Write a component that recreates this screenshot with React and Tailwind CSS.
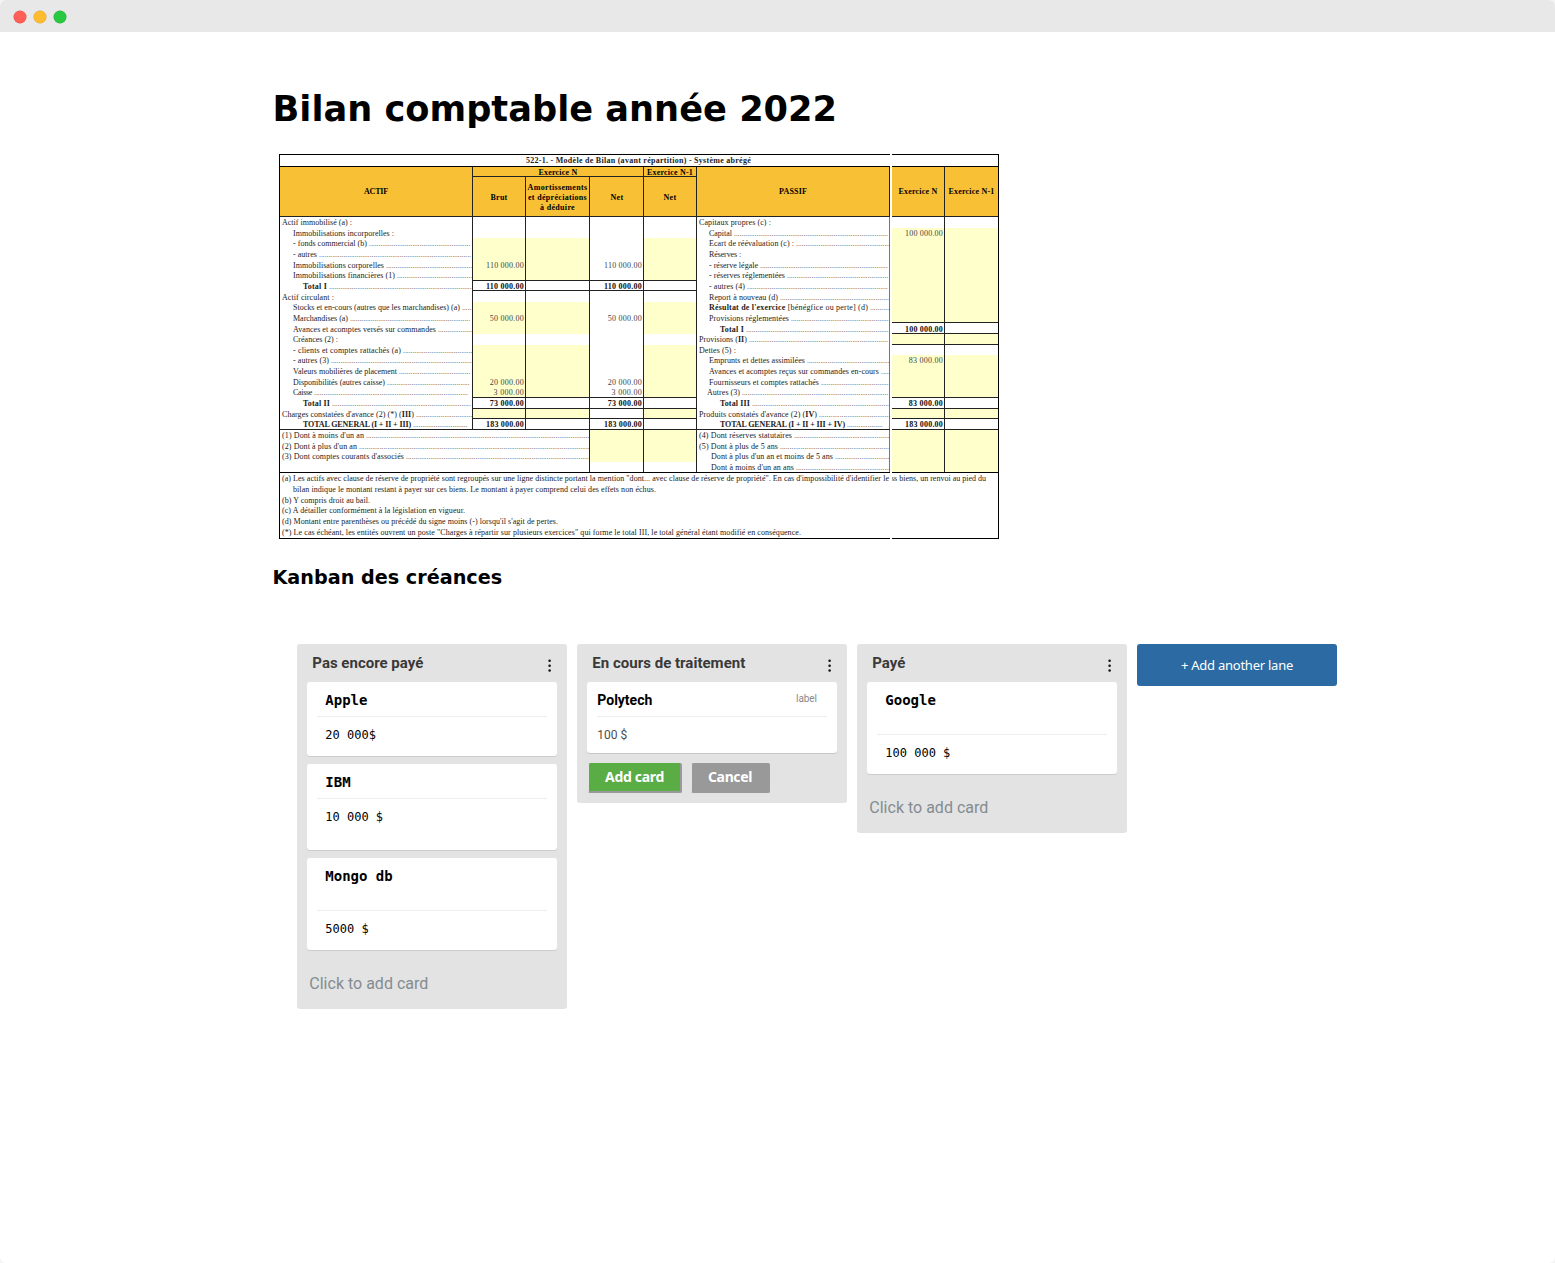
import { useLayoutEffect, useRef, useState } from "react";

// Spreads a line of text over a given width by adjusting its tracking.
function Fit({ w, className = "", children }) {
  const ref = useRef(null);
  const [spacing, setSpacing] = useState(0);
  useLayoutEffect(() => {
    const el = ref.current;
    const natural = el.getBoundingClientRect().width;
    setSpacing((w - natural) / el.textContent.length);
  }, [w]);
  return (
    <span ref={ref} className={"inline-block shrink-0 whitespace-pre " + className} style={{ letterSpacing: spacing + "px" }}>
      {children}
    </span>
  );
}

const DOT_PITCH = 1.875;

// Dot leader that holds as many periods as its cell has room for.
function Leader() {
  const ref = useRef(null);
  const [count, setCount] = useState(0);
  useLayoutEffect(() => {
    setCount(Math.floor(ref.current.getBoundingClientRect().width / DOT_PITCH));
  }, []);
  return (
    <span ref={ref} className="ml-[2px] min-w-0 flex-1 text-[7.5px] whitespace-nowrap text-[#444]">
      {".".repeat(count)}
    </span>
  );
}

const INDENT = { 0: "pl-[2px]", 1: "pl-[13px]", 2: "pl-[23px]", 3: "pl-[12px]", 4: "pl-[10px]", 5: "pl-[14px]" };

function Label({ row }) {
  const [indent, text, w, dots, bold] = row;
  return (
    <div className={"flex min-h-0 items-center pt-[0.6px] pr-px " + INDENT[indent]}>
      <Fit w={w} className={bold ? "font-bold" : ""}>{text}</Fit>
      {dots && <Leader />}
    </div>
  );
}

const actif = [
  [0, "Actif immobilisé (a) :", 70],
  [1, "Immobilisations incorporelles :", 101],
  [1, "- fonds commercial (b)", 74, true],
  [1, "- autres", 24, true],
  [1, "Immobilisations corporelles", 91, true],
  [1, "Immobilisations financières (1)", 102, true],
  [2, "Total I", 24, true, true],
  [0, "Actif circulant :", 52],
  [1, "Stocks et en-cours (autres que les marchandises) (a)", 167, true],
  [1, "Marchandises (a)", 55, true],
  [1, "Avances et acomptes versés sur commandes", 143, true],
  [1, "Créances (2) :", 45],
  [1, "- clients et comptes rattachés (a)", 108, true],
  [1, "- autres (3)", 36, true],
  [1, "Valeurs mobilières de placement", 104, true],
  [1, "Disponibilités (autres caisse)", 92, true],
  [1, "Caisse", 19, true],
  [2, "Total II", 27, true, true],
  [0, <>Charges constatées d'avance (2) (*) (<b>III</b>)</>, 132, true],
  [2, "TOTAL GENERAL (I + II + III)", 108, true, true],
];

const passif = [
  [0, "Capitaux propres (c) :", 72],
  [3, "Capital", 23, true],
  [3, "Ecart de réévaluation (c) :", 85, true],
  [3, "Réserves :", 32],
  [3, "- réserve légale", 49, true],
  [3, "- réserves réglementées", 76, true],
  [3, "- autres (4)", 36, true],
  [3, "Report à nouveau (d)", 69, true],
  [3, <><b>Résultat de l'exercice</b> [bénégfice ou perte] (d)</>, 159, true],
  [3, "Provisions réglementées", 80, true],
  [2, "Total I", 24, true, true],
  [0, <>Provisions (<b>II</b>)</>, 48, true],
  [0, "Dettes (5) :", 37],
  [3, "Emprunts et dettes assimilées", 96, true],
  [3, "Avances et acomptes reçus sur commandes en-cours", 170, true],
  [3, "Fournisseurs et comptes rattachés", 110, true],
  [4, "Autres (3)", 33, true],
  [2, "Total III", 30, true, true],
  [0, <>Produits constatés d'avance (2) (<b>IV</b>)</>, 118, true],
  [2, "TOTAL GENERAL (I + II + III + IV)", 125, true, true],
];

const actifNotes = [
  [0, "(1) Dont à moins d'un an", 82, true],
  [0, "(2) Dont à plus d'un an", 75, true],
  [0, "(3) Dont comptes courants d'associés", 122, true],
];
const passifNotes = [
  [0, "(4) Dont réserves statutaires", 93, true],
  [0, "(5) Dont à plus de 5 ans", 79, true],
  [5, "Dont à plus d'un an et moins de 5 ans", 122, true],
  [5, "Dont à moins d'un an ans", 83, true],
];

const ACTIF_FILL = [2, 3, 4, 5, 8, 9, 10, 12, 13, 14, 15, 16, 18];
const PASSIF_FILL = [1, 2, 3, 4, 5, 6, 7, 8, 9, 11, 13, 14, 15, 16, 18];
const ACTIF_RULES = [6, 7, 17, 18, 19];
const PASSIF_RULES = [10, 11, 12, 17, 18, 19];

const brut = { 4: "110 000.00", 6: "110 000.00", 9: "50 000.00", 15: "20 000.00", 16: "3 000.00", 17: "73 000.00", 19: "183 000.00" };
const passifValues = { 1: "100 000.00", 10: "100 000.00", 13: "83 000.00", 17: "83 000.00", 19: "183 000.00" };
const ACTIF_TOTALS = [6, 17, 19];
const PASSIF_TOTALS = [10, 17, 19];

function Values({ values = {}, fill = [], rules, totals, line = true }) {
  return (
    <div className={"grid grid-rows-[repeat(20,10.65px)] " + (line ? "border-r border-[#222]" : "")}>
      {Array.from({ length: 20 }, (_, i) => (
        <div
          key={i}
          className={
            "flex items-center justify-end pt-[0.6px] pr-px " +
            (fill.includes(i) ? "bg-[#ffffcc] " : "") +
            (rules.includes(i) ? "shadow-[0_-1px_0_#222] " : "") +
            (totals.includes(i) ? "font-bold text-[#111]" : "text-[#444]")
          }
        >
          {values[i] && <Fit w={values[i].length * 3.8}>{values[i]}</Fit>}
        </div>
      ))}
    </div>
  );
}

const COLS = "grid grid-cols-[193px_53px_64px_54px_53px_193px_2px_53px_53px]";
const HEAD = "flex items-center justify-center border-[#222]";

function Sheet() {
  return (
    <div className="relative ml-[6px] h-[385px] w-[720px] border border-black bg-white font-['Liberation_Serif',serif] text-[8px] leading-[9px] text-[#1c1c1c]">
      <div className="flex h-[12px] items-center justify-center border-b border-black pr-px font-bold">
        <Fit w={225}>522-1. - Modèle de Bilan (avant répartition) - Système abrégé</Fit>
      </div>
      <div className={COLS + " h-[50px] border-b border-[#222] bg-[#f8c135] font-bold text-black"}>
        <div className={HEAD + " border-r"}><Fit w={24}>ACTIF</Fit></div>
        <div className="col-span-3 grid grid-cols-[53px_64px_54px] grid-rows-[10px_39px] border-r border-[#222]">
          <div className={HEAD + " col-span-3 border-b pt-px pr-px"}><Fit w={39}>Exercice N</Fit></div>
          <div className={HEAD + " border-r pt-px"}><Fit w={17}>Brut</Fit></div>
          <div className={HEAD + " flex-col border-r pt-[2px] leading-[10px]"}>
            <Fit w={60}>Amortissements</Fit>
            <Fit w={59}>et dépréciations</Fit>
            <Fit w={35}>à déduire</Fit>
          </div>
          <div className={HEAD + " pt-px"}><Fit w={13}>Net</Fit></div>
        </div>
        <div className="grid grid-rows-[10px_39px] border-r border-[#222]">
          <div className={HEAD + " border-b pt-px"}><Fit w={46}>Exercice N-1</Fit></div>
          <div className={HEAD + " pt-px"}><Fit w={13}>Net</Fit></div>
        </div>
        <div className={HEAD + " border-r"}><Fit w={28}>PASSIF</Fit></div>
        <div />
        <div className={HEAD + " border-r"}><Fit w={39}>Exercice N</Fit></div>
        <div className={HEAD}><Fit w={46}>Exercice N-1</Fit></div>
      </div>
      <div className={COLS + " h-[213px] grid-rows-[212px] border-b border-[#222]"}>
        <div className="grid grid-rows-[repeat(20,10.65px)] border-r border-[#222]">
          {actif.map((row, i) => <Label key={i} row={row} />)}
        </div>
        <Values values={brut} fill={ACTIF_FILL} rules={ACTIF_RULES} totals={ACTIF_TOTALS} />
        <Values fill={ACTIF_FILL} rules={ACTIF_RULES} totals={ACTIF_TOTALS} />
        <Values values={brut} rules={ACTIF_RULES} totals={ACTIF_TOTALS} />
        <Values fill={ACTIF_FILL} rules={ACTIF_RULES} totals={ACTIF_TOTALS} />
        <div className="grid grid-rows-[repeat(20,10.65px)] border-r border-[#777]">
          {passif.map((row, i) => <Label key={i} row={row} />)}
        </div>
        <div />
        <Values values={passifValues} fill={PASSIF_FILL} rules={PASSIF_RULES} totals={PASSIF_TOTALS} />
        <Values fill={PASSIF_FILL} rules={PASSIF_RULES} totals={PASSIF_TOTALS} line={false} />
      </div>
      <div className="grid h-[43px] grid-cols-[310px_54px_53px_193px_2px_53px_53px] grid-rows-[42px] border-b border-black">
        <div className="grid grid-rows-[repeat(4,10.65px)] border-r border-[#222]">
          {actifNotes.map((row, i) => <Label key={i} row={row} />)}
        </div>
        <div className="border-r border-[#222]"><div className="h-[32px] bg-[#ffffcc]" /></div>
        <div className="border-r border-[#222]"><div className="h-[32px] bg-[#ffffcc]" /></div>
        <div className="grid grid-rows-[repeat(4,10.65px)] border-r border-[#777]">
          {passifNotes.map((row, i) => <Label key={i} row={row} />)}
        </div>
        <div />
        <div className="border-r border-[#222] bg-[#ffffcc]" />
        <div className="bg-[#ffffcc]" />
      </div>
      <div className="flex flex-col pt-px pl-[2px] leading-[10.8px]">
        <div className="flex gap-[2px]">
          <Fit w={607}>{"(a) Les actifs avec clause de réserve de propriété sont regroupés sur une ligne distincte portant la mention \"dont... avec clause de réserve de propriété\". En cas d'impossibilité d'identifier le"}</Fit>
          <Fit w={95}>ss biens, un renvoi au pied du</Fit>
        </div>
        <Fit w={363} className="ml-[11px] self-start">bilan indique le montant restant à payer sur ces biens. Le montant à payer comprend celui des effets non échus.</Fit>
        <Fit w={88} className="self-start">(b) Y compris droit au bail.</Fit>
        <Fit w={183} className="self-start">(c) A détailler conformément à la législation en vigueur.</Fit>
        <Fit w={276} className="self-start">(d) Montant entre parenthèses ou précédé du signe moins (-) lorsqu'il s'agit de pertes.</Fit>
        <Fit w={519} className="self-start">{"(*) Le cas échéant, les entités ouvrent un poste \"Charges à répartir sur plusieurs exercices\" qui forme le total III, le total général étant modifié en conséquence."}</Fit>
      </div>
      <div className="absolute -top-px -bottom-px left-[610px] w-[2px] bg-white" />
    </div>
  );
}

function Card({ title, amount, headClass, bodyClass }) {
  return (
    <article className="mb-[8px] rounded-[3px] bg-white px-[10px] font-['DejaVu_Sans_Mono',monospace] text-black shadow-[0_1px_0_#ccc]">
      <header className={"border-b border-[#eee] pt-[9px] pl-[8.3px] text-[14px] leading-[18px] font-bold " + headClass}>{title}</header>
      <div className={"pl-[8.3px] text-[12px] leading-[18px] " + bodyClass}>{amount}</div>
    </article>
  );
}

function Lane({ title, w, height, children }) {
  return (
    <section className={"mr-[10px] w-[270px] shrink-0 rounded-[3px] bg-[#e3e3e3] px-[10px] " + height}>
      <header className="flex h-[38px] items-start justify-between pr-[5px] pl-[5.3px]">
        <span className="pt-[9px] text-[15px] leading-[20px] font-bold text-[#393939]"><Fit w={w}>{title}</Fit></span>
        <svg width="5" height="14" viewBox="0 0 5 14" className="mt-[15px]" fill="#111">
          <circle cx="2.6" cy="1.8" r="1.25" />
          <circle cx="2.6" cy="6.7" r="1.25" />
          <circle cx="2.6" cy="11.6" r="1.25" />
        </svg>
      </header>
      {children}
    </section>
  );
}

function AddLink() {
  return <div className="pt-[16px] pl-[2.3px] text-[16px] leading-[20px] text-[#838c91]"><Fit w={119}>Click to add card</Fit></div>;
}

export default function App() {
  return (
    <div className="h-[1263px] w-[1555px] overflow-hidden bg-[#f4f4f4]">
      <div className="h-full overflow-hidden rounded-[6px] bg-white">
        <div className="flex h-[32px] items-center gap-[8px] bg-[#e8e8e8] pt-[2px] pl-[14px]">
          <span className="h-[12px] w-[12px] rounded-full bg-[#ff5f57] shadow-[0_0_0_0.5px_#e2564d]" />
          <span className="h-[12px] w-[12px] rounded-full bg-[#febc2e] shadow-[0_0_0_0.5px_#dfa23a]" />
          <span className="h-[12px] w-[12px] rounded-full bg-[#28c840] shadow-[0_0_0_0.5px_#2cae3c]" />
        </div>
        <main className="pl-[273px] font-[Roboto,sans-serif]">
          <h1 className="-ml-[0.5px] pt-[56px] font-['DejaVu_Sans',sans-serif] text-[35.2px] leading-[42px] font-bold text-black">Bilan comptable année 2022</h1>
          <div className="pt-[24px]"><Sheet /></div>
          <h2 className="-ml-[0.5px] pt-[27px] font-['DejaVu_Sans',sans-serif] text-[19.2px] leading-[24px] font-bold text-black">Kanban des créances</h2>
          <div className="flex items-start pt-[54px] pl-[24px]">
            <Lane title="Pas encore payé" w={111} height="h-[365px]">
              <Card title="Apple" amount="20 000$" headClass="h-[35px]" bodyClass="h-[39px] pt-[9px]" />
              <Card title="IBM" amount="10 000 $" headClass="h-[35px]" bodyClass="h-[51px] pt-[9px]" />
              <Card title="Mongo db" amount="5000 $" headClass="h-[53px]" bodyClass="h-[39px] pt-[9px]" />
              <AddLink />
            </Lane>
            <Lane title="En cours de traitement" w={153} height="h-[159px]">
              <article className="rounded-[3px] bg-white px-[10px] shadow-[0_1px_0_#c4c9c4]">
                <header className="flex h-[35px] justify-between border-b border-[#eee] pt-[9px] pr-[10px] text-black">
                  <span className="pl-[0.3px] text-[14px] leading-[18px] font-bold"><Fit w={55}>Polytech</Fit></span>
                  <span className="text-[10px] leading-[16px] text-[#888]"><Fit w={21}>label</Fit></span>
                </header>
                <div className="h-[36px] pt-[9px] pl-[0.3px] text-[12px] leading-[18px] text-[#4d4d4d]"><Fit w={30}>100 $</Fit></div>
              </article>
              <div className="flex gap-[9px] pt-[10px] pl-[1px] font-['Noto_Sans',sans-serif] text-[14px] leading-[27px] font-bold text-white">
                <button className="flex h-[30px] w-[94px] justify-center rounded-[2px] border-r-2 border-b-2 border-l border-[#999] border-l-[#e3e3e3] bg-[#5aac44]"><Fit w={59}>Add card</Fit></button>
                <button className="flex h-[30px] w-[79px] justify-center rounded-[2px] border-r-2 border-b-2 border-l border-[#999] border-l-[#e3e3e3] bg-[#999]"><Fit w={44}>Cancel</Fit></button>
              </div>
            </Lane>
            <Lane title="Payé" w={33} height="h-[189px]">
              <Card title="Google" amount="100 000 $" headClass="h-[53px]" bodyClass="h-[39px] pt-[9px]" />
              <AddLink />
            </Lane>
            <button className="flex h-[42px] w-[200px] items-center justify-center rounded-[3px] bg-[#2b6aa3] pt-[2px] font-['Noto_Sans',sans-serif] text-[13px] text-white"><Fit w={112}>+ Add another lane</Fit></button>
          </div>
        </main>
      </div>
    </div>
  );
}
